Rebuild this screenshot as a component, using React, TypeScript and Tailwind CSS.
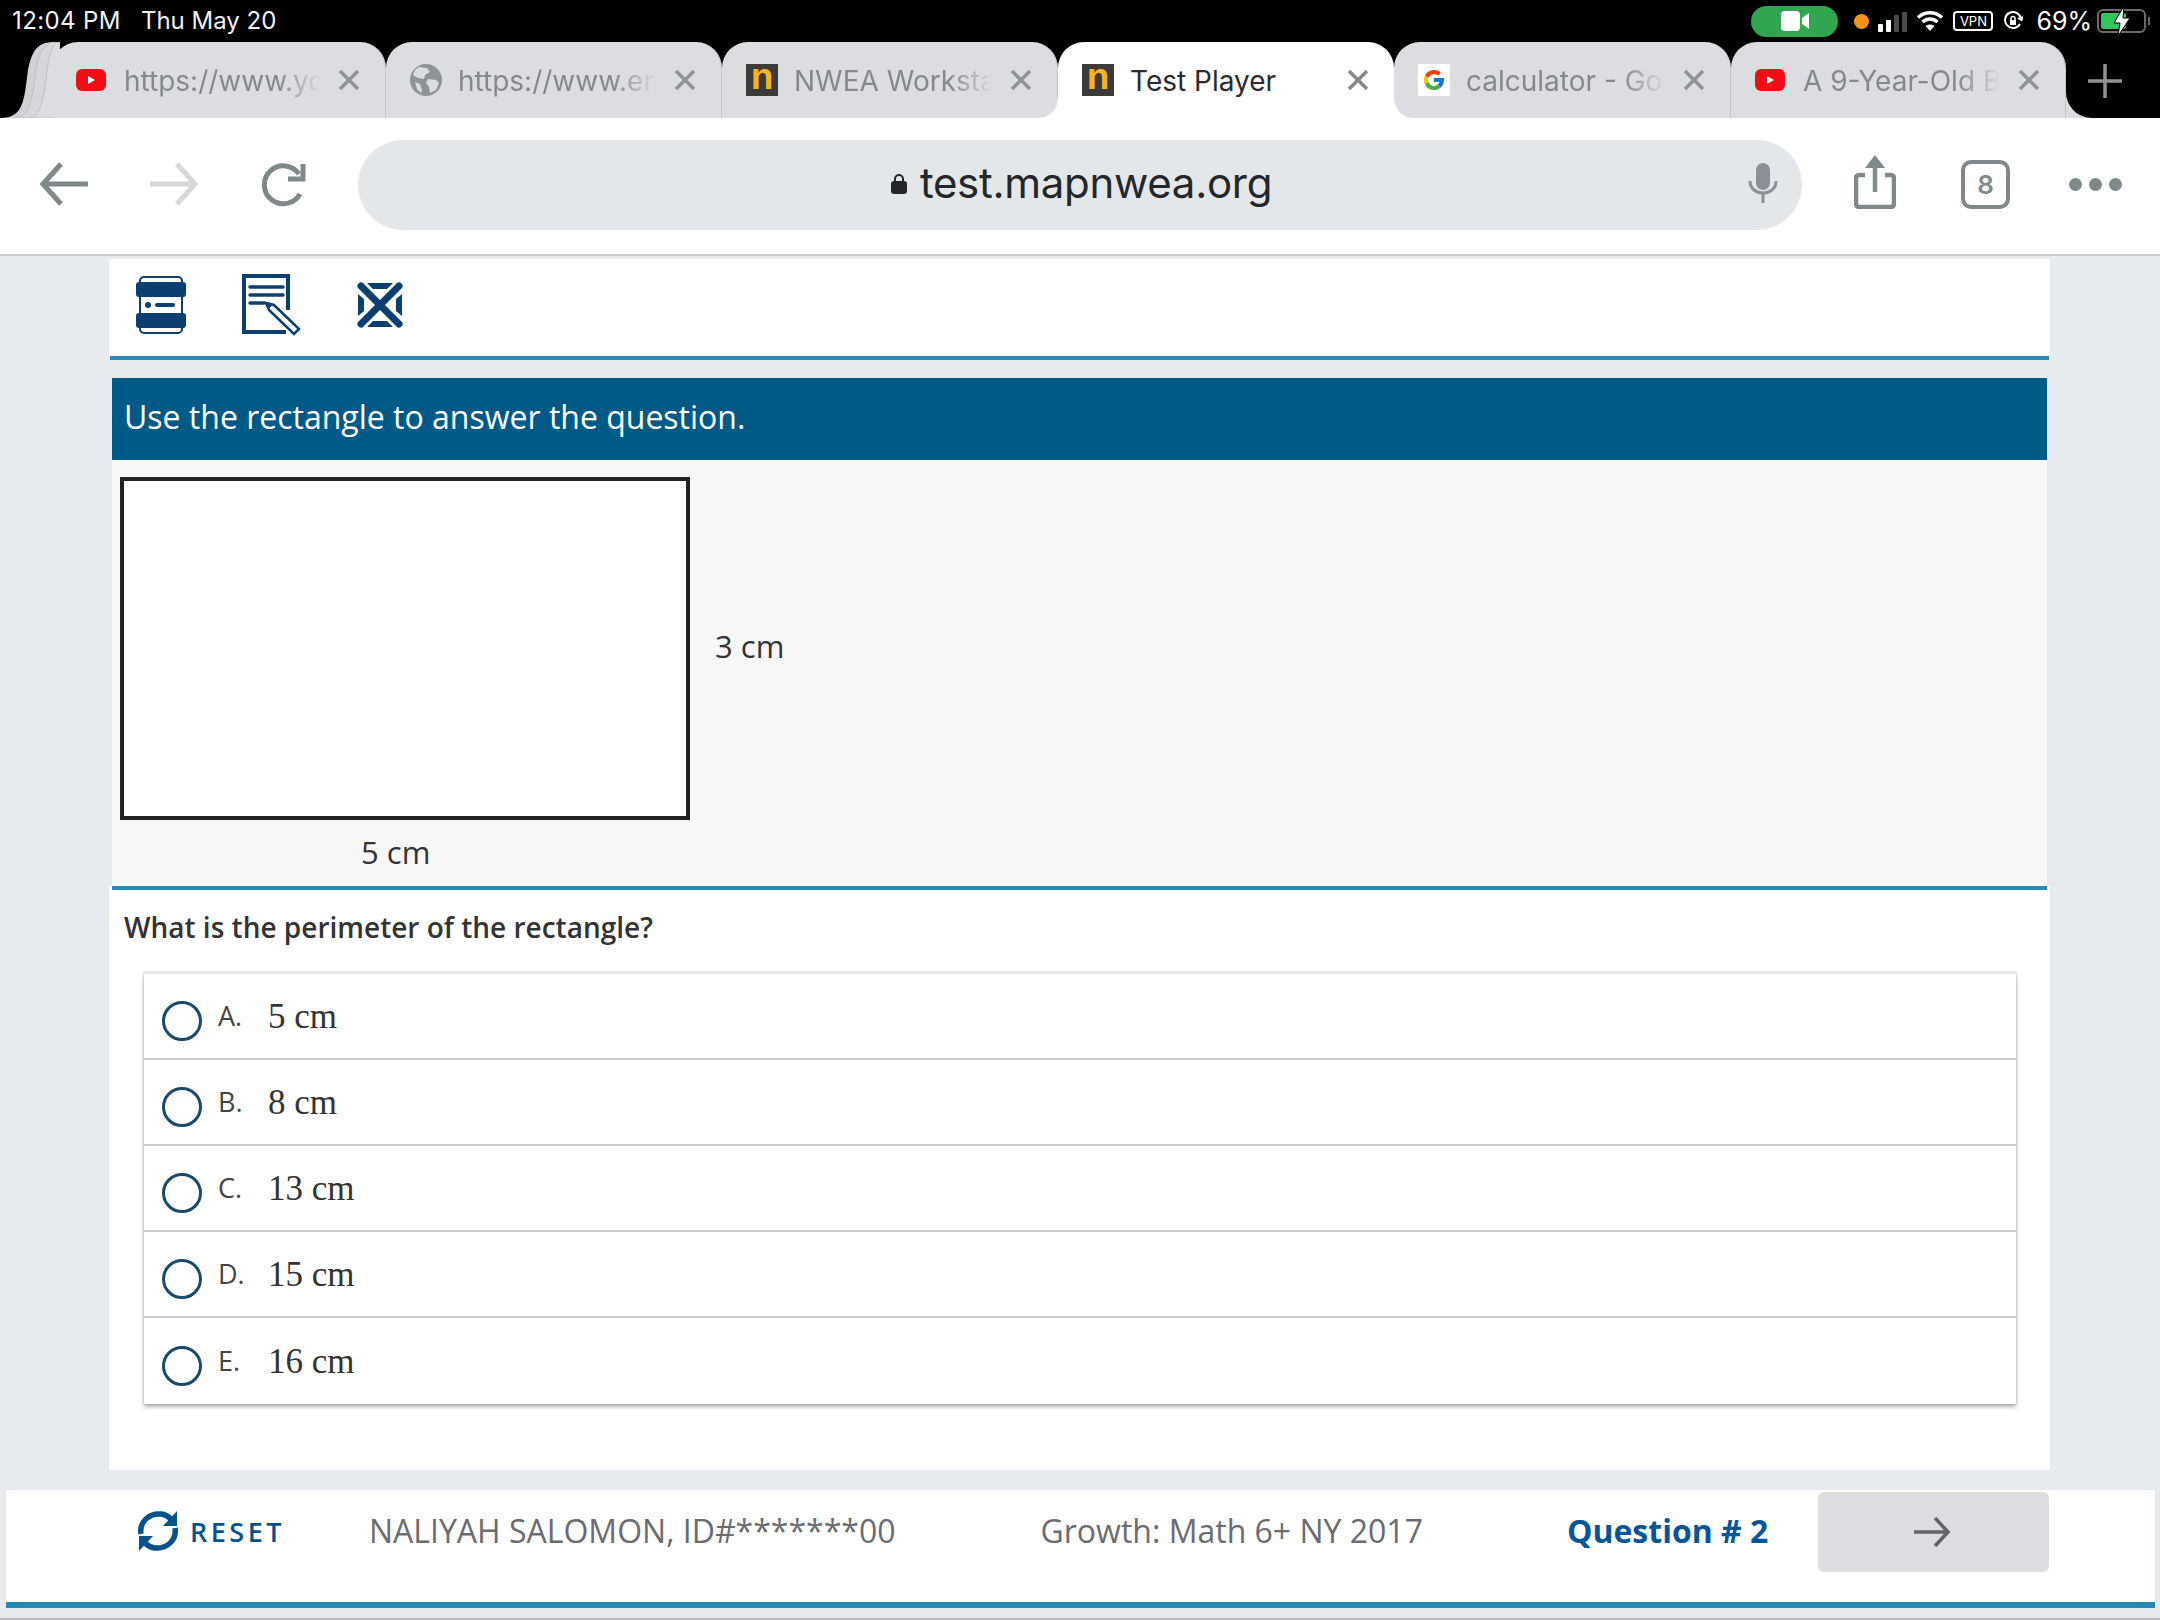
import { FcGoogle } from 'react-icons/fc';

const sans = "font-['Open_Sans',sans-serif]";
const ui = "font-['Inter',sans-serif]";

const choices = [
  { letter: 'A.', value: '5 cm' },
  { letter: 'B.', value: '8 cm' },
  { letter: 'C.', value: '13 cm' },
  { letter: 'D.', value: '15 cm' },
  { letter: 'E.', value: '16 cm' },
];

function YouTubeIcon() {
  return (
    <svg width="30" height="22" viewBox="0 0 30 22">
      <rect width="30" height="22" rx="6" fill="#f40d15" />
      <path d="M12 7l7 4-7 4z" fill="#fff" />
    </svg>
  );
}

function GlobeIcon() {
  return (
    <svg width="32" height="32" viewBox="0 0 32 32">
      <circle cx="16" cy="16" r="16" fill="#8e9396" />
      <path d="M9 3l8 1 3 4-5 3-1 4-6-1-5-3 2-5zM18 15l8 1 3 3-3 7-6 3-1-6-3-4zM5 18l5 2 2 6-1 3-4-4z" fill="#dcdde1" />
    </svg>
  );
}

function NweaIcon() {
  return (
    <span className="flex h-8 w-8 shrink-0 items-center justify-center bg-[#3b3b39] font-['Liberation_Sans',sans-serif] text-[37px] leading-none font-bold text-[#f7b31c]">
      <span className="-mt-[7px]">n</span>
    </span>
  );
}

function GoogleIcon() {
  return (
    <span className="flex h-8 w-8 shrink-0 items-center justify-center bg-white">
      <FcGoogle size={24} />
    </span>
  );
}

function CloseIcon({ active }: { active?: boolean }) {
  return (
    <svg width="22" height="22" viewBox="0 0 22 22" className="shrink-0" stroke={active ? '#85898c' : '#8f9396'} strokeWidth="3.5">
      <path d="M2 2l18 18M20 2L2 20" />
    </svg>
  );
}

function Tab({ icon, title, active, width }: { icon: React.ReactNode; title: string; active?: boolean; width: string }) {
  return (
    <div
      className={`relative flex h-[76px] shrink-0 items-center rounded-t-[26px] pl-[24px] pr-[25px] ${width} ${
        active ? 'z-10 bg-white' : 'border-r border-[#c4c5c9] bg-[#dcdde1]'
      }`}
    >
      {active && (
        <>
          <span className="absolute bottom-0 -left-[20px] h-[20px] w-[20px] bg-white">
            <span className="block h-full w-full rounded-br-[20px] bg-[#dcdde1]" />
          </span>
          <span className="absolute -right-[20px] bottom-0 h-[20px] w-[20px] bg-white">
            <span className="block h-full w-full rounded-bl-[20px] bg-[#dcdde1]" />
          </span>
        </>
      )}
      <span className="flex w-[36px] shrink-0 justify-start">{icon}</span>
      <span
        className={`mt-[2px] ml-[12px] w-[180px] flex-1 overflow-hidden text-[28px] whitespace-nowrap ${ui} ${
          active ? 'text-[#2a2c30]' : 'text-[#85898e] [mask-image:linear-gradient(to_right,black_72%,transparent_92%)]'
        }`}
      >
        {title}
      </span>
      <CloseIcon active={active} />
    </div>
  );
}

function StatusIcons() {
  return (
    <div className="flex items-center pr-[10px]">
      <div className="flex h-[31px] w-[87px] items-center justify-center rounded-full bg-[#30a74e]">
        <svg width="28" height="20" viewBox="0 0 28 20" fill="#fff">
          <rect width="19" height="20" rx="4" />
          <path d="M21 7l7-5v16l-7-5z" />
        </svg>
      </div>
      <span className="ml-[16px] h-[15px] w-[15px] rounded-full bg-[#f7931a]" />
      <div className="mt-[2px] ml-[9px] flex items-end gap-[3px]">
        <span className="h-[8px] w-[5px] rounded-[1px] bg-white" />
        <span className="h-[12px] w-[5px] rounded-[1px] bg-white" />
        <span className="h-[17px] w-[5px] rounded-[1px] bg-[#4a4a4a]" />
        <span className="h-[20px] w-[5px] rounded-[1px] bg-[#4a4a4a]" />
      </div>
      <svg width="28" height="22" viewBox="0 0 28 22" className="ml-[9px]" fill="none" stroke="#fff" strokeWidth="3.5">
        <path d="M2 7.5c7-6.5 17-6.5 24 0M6.5 12c4.500-4 10.500-4 15 0" />
        <path d="M14 21l-4.500-5c2.500-2 6.500-2 9 0z" fill="#fff" stroke="none" />
      </svg>
      <span className={`ml-[9px] flex h-[20px] w-[40px] items-center justify-center rounded-[4px] border-2 border-white text-[13px] leading-none text-white ${ui}`}>
        VPN
      </span>
      <svg width="20" height="20" viewBox="0 0 20 20" className="ml-[10px]" fill="none" stroke="#fff" strokeWidth="2">
        <path d="M17 13a8 8 0 1 1 1-5" />
        <path d="M15 7l3.500 2L20 5.500" />
        <rect x="7" y="9" width="6" height="5" fill="#fff" stroke="none" />
        <path d="M8 9V7.500a2 2 0 0 1 4 0V9" strokeWidth="1.500" />
      </svg>
      <span className={`ml-[13px] text-[25px] leading-none text-white ${ui}`}>69%</span>
      <div className="relative ml-[5px] flex h-[24px] w-[49px] items-center rounded-[6px] border-2 border-[#6b6b6b] p-[2px]">
        <span className="h-full w-[60%] rounded-[2px] bg-[#30c75a]" />
        <svg width="20" height="30" viewBox="0 0 20 30" className="absolute top-[-5px] left-[13px]" fill="#fff" stroke="#000" strokeWidth="1">
          <path d="M12 0L2 17h6l-2 13 12-18h-7z" />
        </svg>
      </div>
      <span className="ml-[2px] h-[8px] w-[2px] bg-[#6b6b6b]" />
    </div>
  );
}

function TopChrome() {
  return (
    <>
      <div className={`flex h-[42px] items-center justify-between bg-black pl-[12px] text-[24px] leading-none text-[#f2f2f2] ${ui}`}>
        <div className="flex gap-[20px]">
          <span className="tracking-[0.4px]">12:04 PM</span>
          <span>Thu May 20</span>
        </div>
        <StatusIcons />
      </div>
      <div className="relative flex h-[76px] bg-black pl-[52px]">
        <svg width="60" height="76" viewBox="0 0 60 76" className="absolute top-0 left-0">
          <path d="M0 76c24 0 24-18 28-48 4-20 10-28 26-28h6v76z" fill="#d0d1d5" />
          <path d="M14 76c16 0 18-18 22-48 4-20 8-28 22-28h2v76z" fill="#d6d7db" stroke="#bfc0c4" />
          <path d="M28 76c12 0 16-18 19-48 3-20 6-28 13-28v76z" fill="#dcdde1" stroke="#bfc0c4" />
        </svg>
        <Tab width="w-[334px] relative" icon={<YouTubeIcon />} title="https://www.yo" />
        <Tab width="w-[336px]" icon={<GlobeIcon />} title="https://www.en" />
        <Tab width="w-[336px]" icon={<NweaIcon />} title="NWEA Worksta" />
        <Tab width="w-[336px]" active icon={<NweaIcon />} title="Test Player" />
        <Tab width="w-[337px]" icon={<GoogleIcon />} title="calculator - Go" />
        <div className="relative">
          <Tab width="w-[335px]" icon={<YouTubeIcon />} title="A 9-Year-Old B" />
          <span className="absolute -right-[26px] bottom-0 h-[26px] w-[26px] bg-[#dcdde1]">
            <span className="block h-full w-full rounded-bl-[26px] bg-black" />
          </span>
        </div>
        <svg width="34" height="34" viewBox="0 0 34 34" className="mt-[22px] ml-[22px]" stroke="#8e9295" strokeWidth="3.500">
          <path d="M17 0v34M0 17h34" />
        </svg>
      </div>
      <div className="flex h-[138px] items-center border-b-2 border-[#c9cbce] bg-white pb-[3px] pl-[40px]">
        <svg width="48" height="44" viewBox="0 0 48 44" fill="none" stroke="#7f898c" strokeWidth="5" className="-mt-[2px]">
          <path d="M2 22h46M21 2L3 22l18 20" />
        </svg>
        <svg width="48" height="44" viewBox="0 0 48 44" fill="none" stroke="#d5d7d8" strokeWidth="5" className="-mt-[2px] ml-[62px]">
          <path d="M0 22h46M27 2l18 20-18 20" />
        </svg>
        <svg width="46" height="44" viewBox="0 0 46 44" fill="none" stroke="#7f898c" strokeWidth="5" className="ml-[62px]">
          <path d="M40 31a19 19 0 1 1-1-20" />
          <path d="M43 1v15H28" />
        </svg>
        <div className="ml-[52px] flex h-[90px] w-[1444px] items-center justify-center rounded-full bg-[#e4e7ea]">
          <div className={`relative -mt-[3px] flex w-full items-center justify-center pl-[3px] text-[42px] leading-none text-[#24262a] ${ui}`}>
            <svg width="16" height="20" viewBox="0 0 16 20" className="mt-[2px] mr-[13px]" fill="#24262a">
              <rect y="7" width="16" height="13" rx="3" />
              <path d="M4 8V5a4 4 0 0 1 8 0v3" fill="none" stroke="#24262a" strokeWidth="2" />
            </svg>
            <span className="-tracking-[0.3px]">test.mapnwea.org</span>
            <svg width="30" height="40" viewBox="0 0 30 40" className="absolute right-[24px]" fill="none" stroke="#8a9196" strokeWidth="3">
              <rect x="8" y="0" width="14" height="27" rx="7" fill="#8a9196" stroke="none" />
              <path d="M2 18c0 16 26 16 26 0M15 31v9" />
            </svg>
          </div>
        </div>
        <svg width="42" height="54" viewBox="0 0 42 54" fill="none" stroke="#7f898c" strokeWidth="4.500" className="mb-[6px] ml-[52px]">
          <path d="M11 20H5a3 3 0 0 0-3 3v26a3 3 0 0 0 3 3h32a3 3 0 0 0 3-3V23a3 3 0 0 0-3-3h-6" />
          <path d="M21 37V3" />
          <path d="M21 0l10 13H11z" fill="#7f898c" stroke="none" />
        </svg>
        <div className={`ml-[65px] flex h-[49px] w-[49px] items-center justify-center rounded-[10px] border-[4px] border-[#7f898c] text-[26px] leading-none font-semibold text-[#7f898c] ${ui}`}>
          8
        </div>
        <div className="ml-[59px] flex gap-[7px]">
          <span className="h-[13px] w-[13px] rounded-full bg-[#7f898c]" />
          <span className="h-[13px] w-[13px] rounded-full bg-[#7f898c]" />
          <span className="h-[13px] w-[13px] rounded-full bg-[#7f898c]" />
        </div>
      </div>
    </>
  );
}

function TestTools() {
  return (
    <div className="flex h-[97px] items-center bg-white pb-[6px] pl-[27px]">
      <svg width="50" height="58" viewBox="0 0 50 58" fill="#0a3f6f">
        <rect x="4" y="1" width="42" height="56" rx="4" fill="none" stroke="#0a3f6f" strokeWidth="2" />
        <rect y="6" width="50" height="15" rx="3" />
        <rect y="37" width="50" height="15" rx="3" />
        <circle cx="12" cy="29" r="3" />
        <rect x="19" y="27" width="20" height="4" rx="2" />
      </svg>
      <svg width="60" height="62" viewBox="0 0 60 62" className="ml-[56px]" fill="none" stroke="#0a3f6f">
        <path d="M46 36V2H2v56h42" strokeWidth="4" />
        <path d="M8 13h33M8 21h33M8 29h14" strokeWidth="3.500" strokeLinecap="round" />
        <path d="M24 29l8 2 25 24-5 5-25-24z" fill="#fff" strokeWidth="2.500" />
        <path d="M24 29l7 1-5 5z" fill="#0a3f6f" strokeWidth="1" />
      </svg>
      <svg width="48" height="48" viewBox="0 0 48 48" className="ml-[54px]" fill="#0a3f6f">
        <path d="M11 2h26l-6 6H17zM11 46h26l-6-6H17zM2 13v22l6-5V18zM46 13v22l-6-5V18z" />
        <path d="M5 5l38 38M43 5L5 43" stroke="#fff" strokeWidth="11" strokeLinecap="round" />
        <path d="M5 5l38 38M43 5L5 43" stroke="#0a3f6f" strokeWidth="7" strokeLinecap="round" />
      </svg>
    </div>
  );
}

function Stimulus() {
  return (
    <div className="mx-[3px] h-[426px] bg-[#f7f7f7] pt-[17px] pl-[8px]">
      <div className="flex items-center">
        <div className="h-[343px] w-[570px] border-4 border-[#222] bg-white" />
        <span className={`mb-[5px] ml-[25px] text-[31px] leading-none text-[#333] ${sans}`}>3 cm</span>
      </div>
      <p className={`mt-[15px] ml-[241px] text-[31px] leading-[34px] text-[#333] ${sans}`}>5 cm</p>
    </div>
  );
}

function Choice({ letter, value, last }: { letter: string; value: string; last: boolean }) {
  return (
    <div className={`flex h-[86px] items-center pl-[18px] ${last ? '' : 'border-b-2 border-[#cccccc]'}`}>
      <span className="mt-[9px] h-[40px] w-[40px] shrink-0 rounded-full border-[3px] border-[#1b4a68]" />
      <span className={`ml-[16px] w-[50px] pb-[2px] text-[27px] leading-none text-[#444] ${sans}`}>{letter}</span>
      <span className="font-['Liberation_Serif',serif] text-[35px] leading-none text-[#333]">{value}</span>
    </div>
  );
}

function Footer() {
  return (
    <div className="mt-[20px] mr-[5px] ml-[6px] flex h-[118px] flex-col">
      <div className={`relative flex h-[112px] items-center bg-white pb-[30px] pl-[131px] ${sans}`}>
        <svg width="42" height="42" viewBox="0 0 42 42" fill="none" stroke="#07528a" strokeWidth="5.500">
          <path d="M4 24C2 12 12 3 24 4c5 .5 8 3 10 5" />
          <path d="M38 18c2 12-8 21-20 20-5-.5-8-3-10-5" />
          <path d="M40 1v15H26zM2 41V26h14z" fill="#07528a" stroke="none" />
        </svg>
        <span className="ml-[11px] text-[27px] leading-none font-semibold tracking-[3.5px] text-[#07528a]">RESET</span>
        <span className="ml-[84px] text-[32px] leading-none text-[#6a6c70]">NALIYAH SALOMON, ID#*******00</span>
        <span className="ml-[145px] text-[32px] leading-none text-[#6a6c70]">Growth: Math 6+ NY 2017</span>
        <span className="ml-[144px] text-[32px] leading-none font-bold text-[#04569a]">Question # 2</span>
        <button className="absolute top-[2px] left-[1812px] flex h-[80px] w-[231px] items-center justify-center rounded-[6px] bg-[#dcdde0] pr-[4px]">
          <svg width="36" height="30" viewBox="0 0 36 30" fill="none" stroke="#626468" strokeWidth="3.500">
            <path d="M0 15h34M21 1l13 14-13 14" />
          </svg>
        </button>
      </div>
      <div className="h-[6px] bg-[#2389b5]" />
    </div>
  );
}

export default function App() {
  return (
    <div className="flex h-[1620px] w-[2160px] flex-col overflow-hidden border-b-2 border-[#bbbbbb] bg-[#e7ebef]">
      <TopChrome />
      <div className="pt-[3px]">
        <div className="mx-[109px] mr-[110px]">
          <TestTools />
          <div className="mx-[1px] h-[4px] bg-[#2b8ab5]" />
          <div className="mt-[18px]">
            <div className={`mx-[3px] flex h-[82px] items-center bg-[#005a87] pb-[5px] pl-[12px] text-[32px] leading-none text-white ${sans}`}>
              Use the rectangle to answer the question.
            </div>
            <Stimulus />
          </div>
          <div className="h-[584px] bg-white">
            <div className="mx-[3px] h-[4px] bg-[#2389b5]" />
            <h2 className={`mt-[18px] ml-[15px] text-[28px] leading-[38px] font-semibold text-[#333] ${sans}`}>
              What is the perimeter of the rectangle?
            </h2>
            <div className="mt-[26px] mr-[34px] ml-[35px] border-t-2 border-[#e6e6e6] shadow-[0_3px_4px_rgba(0,0,0,0.3),0_0_2px_rgba(0,0,0,0.2)]">
              {choices.map((choice, i) => (
                <Choice key={choice.letter} letter={choice.letter} value={choice.value} last={i === choices.length - 1} />
              ))}
            </div>
          </div>
        </div>
        <Footer />
      </div>
    </div>
  );
}
